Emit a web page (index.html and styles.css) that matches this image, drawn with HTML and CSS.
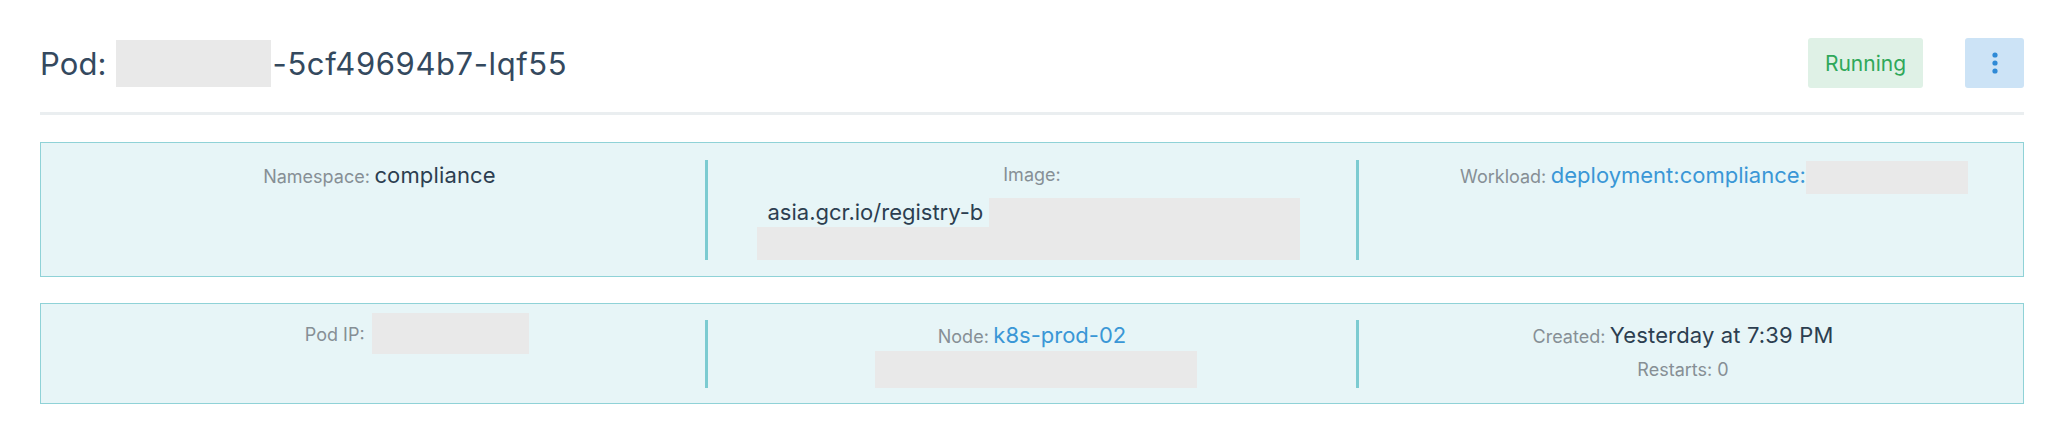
FILE: index.html
```html
<!DOCTYPE html>
<html lang="en">
<head>
<meta charset="utf-8">
<title>Pod</title>
<link rel="stylesheet" href="styles.css">
</head>
<body>
<main class="page">
  <header class="header">
    <h1 class="title">
      <span>Pod:</span>
      <span class="redact title-redact"></span>
      <span class="title-rest">-5cf49694b7-lqf55</span>
    </h1>
    <div class="badge">Running</div>
    <button class="menu-btn" type="button" aria-label="Actions">
      <svg width="6" height="22" viewBox="0 0 6 22"><circle cx="3" cy="3" r="2.6"/><circle cx="3" cy="11" r="2.6"/><circle cx="3" cy="19" r="2.6"/></svg>
    </button>
  </header>
  <hr class="sep">

  <section class="box box-top">
    <div class="col">
      <div class="line"><span class="label">Namespace:</span> <span class="value">compliance</span></div>
    </div>
    <div class="col col-div">
      <div class="line"><span class="label">Image:</span></div>
      <div class="image-value">
        <div class="image-text">asia.gcr.io/registry-b</div>
        <div class="redact image-redact-a"></div>
        <div class="redact image-redact-b"></div>
      </div>
    </div>
    <div class="col col-div">
      <div class="line"><span class="label">Workload:</span> <a class="link" href="#">deployment:compliance:</a><span class="hidden-val workload-hidden"><span class="redact overlay workload-mask"></span></span></div>
    </div>
  </section>

  <section class="box box-bottom">
    <div class="col">
      <div class="line"><span class="label">Pod IP:</span> <span class="hidden-val ip-hidden"><span class="redact overlay ip-mask"></span></span></div>
    </div>
    <div class="col col-div">
      <div class="line"><span class="label">Node:</span> <a class="link" href="#">k8s-prod-02</a></div>
      <div class="redact node-redact"></div>
    </div>
    <div class="col col-div">
      <div class="line"><span class="label">Created:</span> <span class="value">Yesterday at 7:39 PM</span></div>
      <div class="sub">Restarts: 0</div>
    </div>
  </section>
</main>
</body>
</html>
```

FILE: styles.css
```css
* { box-sizing: border-box; }

html, body {
  margin: 0;
  background: #ffffff;
}

body {
  font-family: "Inter", "Open Sans", "Liberation Sans", sans-serif;
  color: #2c3e50;
}

.page {
  padding: 38px 32px 0 40px;
}

.header {
  display: flex;
  align-items: center;
  height: 50px;
}

.title {
  flex: 1;
  display: flex;
  align-items: center;
  margin: 0;
  font-size: 31px;
  font-weight: 400;
  color: #34495e;
  letter-spacing: 0.1px;
}

.redact {
  background: #e9e9e9;
}

.title-redact {
  display: inline-block;
  width: 155px;
  height: 47px;
  margin-left: 9px;
}

.title-rest {
  margin-left: 2px;
  letter-spacing: 0.6px;
}

.badge {
  width: 115px;
  height: 50px;
  display: flex;
  align-items: center;
  justify-content: center;
  background: #dff1e6;
  color: #2fa85a;
  border-radius: 3px;
  font-size: 21px;
  margin-right: 42px;
}

.menu-btn {
  width: 59px;
  height: 50px;
  border: 0;
  padding: 0;
  border-radius: 3px;
  background: #cce3f6;
  display: flex;
  align-items: center;
  justify-content: center;
}

.menu-btn svg {
  fill: #2f8ad6;
}

.sep {
  margin: 24px 0 0;
  border: 0;
  height: 3px;
  background: #eaeef0;
}

.box {
  display: grid;
  grid-template-columns: 1fr 1fr 1fr;
  background: #e7f5f7;
  border: 1px solid #8fd2d7;
  padding: 17px 16px 16px 13px;
}

.box-top {
  margin-top: 27px;
}

.box-bottom {
  margin-top: 26px;
  padding: 16px 16px 15px 13px;
}

.col {
  display: flex;
  flex-direction: column;
  align-items: center;
  text-align: center;
}

.col-div {
  border-left: 3px solid #7ccbd1;
}

.line {
  height: 30px;
  line-height: 30px;
  white-space: nowrap;
}

.label {
  font-size: 18px;
  color: #868f95;
}

.value {
  font-size: 22px;
  color: #2c3e50;
  letter-spacing: 0.15px;
}

.link {
  font-size: 22px;
  color: #3a97d6;
  text-decoration: none;
}

.hidden-val {
  display: inline-block;
  position: relative;
  height: 30px;
  vertical-align: top;
}

.overlay {
  position: absolute;
}

.workload-hidden {
  width: 100px;
}

.workload-mask {
  left: 0;
  top: 1px;
  width: 162px;
  height: 33px;
}

.ip-hidden {
  width: 85px;
}

.ip-mask {
  left: 3px;
  top: -7px;
  width: 157px;
  height: 41px;
}

.image-value {
  display: grid;
  grid-template-columns: 232px 311px;
  grid-template-rows: 29px 33px;
  width: 543px;
  margin-top: 8px;
  margin-right: 8px;
}

.image-text {
  grid-column: 1;
  grid-row: 1;
  padding-left: 11px;
  font-size: 22px;
  line-height: 29px;
  text-align: left;
  white-space: nowrap;
  color: #2c3e50;
}

.image-redact-a {
  grid-column: 2;
  grid-row: 1 / 3;
}

.image-redact-b {
  grid-column: 1;
  grid-row: 2;
}

.node-redact {
  width: 322px;
  height: 37px;
  margin-top: 1px;
  margin-left: 8px;
}

.sub {
  margin-top: 5px;
  font-size: 18px;
  line-height: 30px;
  color: #868f95;
}
```
